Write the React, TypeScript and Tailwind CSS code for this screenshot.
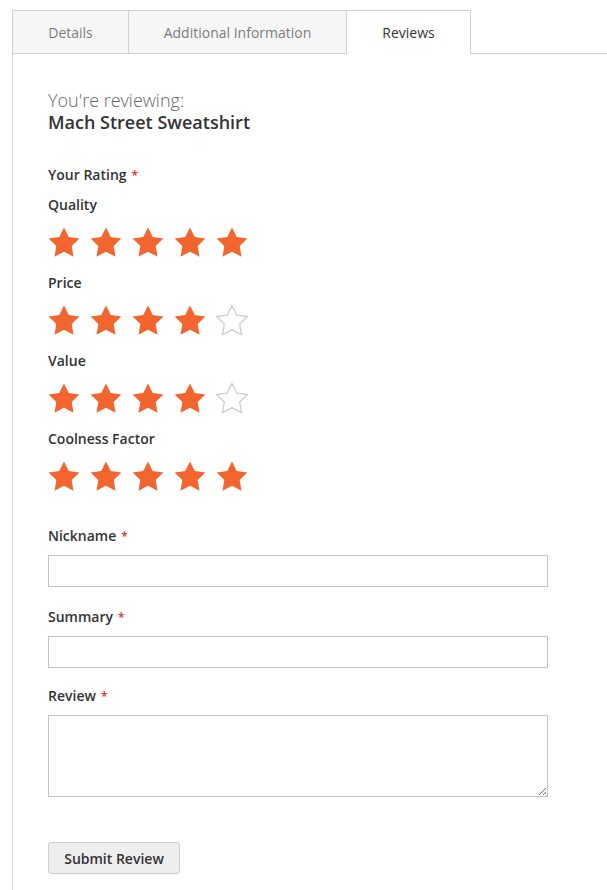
import React from 'react';

const STAR = 'M12 2l3.09 6.26L22 9.27l-5 4.87 1.18 6.88L12 17.77l-6.18 3.25L7 14.14 2 9.27l6.91-1.01L12 2z';

function Star({ filled }: { filled: boolean }) {
  return (
    <svg className="w-[32px] h-[32px]" viewBox="1.6 1.3 20.8 20.4">
      {filled ? (
        <path d={STAR} fill="#f3652f" />
      ) : (
        <path d={STAR} fill="#fff" stroke="#c7c7c7" strokeWidth={0.75} strokeLinejoin="miter" />
      )}
    </svg>
  );
}

function Rating({ label, value }: { label: string; value: number }) {
  return (
    <div className="mb-[15px]">
      <div className="text-[14px] leading-[20px] font-semibold text-[#333] mb-[11px]">{label}</div>
      <div className="flex gap-[10px]">
        {[1, 2, 3, 4, 5].map((i) => (
          <Star key={i} filled={i <= value} />
        ))}
      </div>
    </div>
  );
}

function Label({ children }: { children: React.ReactNode }) {
  return (
    <div className="text-[14px] leading-[20px] font-semibold text-[#333] mb-[8px]">
      {children}
      <span className="ml-[5px] text-[12px] text-[#e02b27]">*</span>
    </div>
  );
}

export default function App() {
  return (
    <div className="min-h-screen bg-white font-['Open_Sans',sans-serif] pt-[10px] pl-[12px]">
      {/* Tabs */}
      <div className="flex h-[44px]">
        <div className="w-[116px] flex items-center justify-center border-t border-l border-b border-[#d1d1d1] bg-[#f6f6f6] text-[14px] text-[#7d7d7d]">
          Details
        </div>
        <div className="w-[218px] flex items-center justify-center border-t border-l border-b border-[#d1d1d1] bg-[#f6f6f6] text-[14px] text-[#7d7d7d]">
          Additional Information
        </div>
        <div className="w-[125px] flex items-center justify-center border-t border-l border-r border-[#d1d1d1] bg-white text-[14px] text-[#333]">
          Reviews
        </div>
        <div className="flex-1 border-b border-[#d1d1d1]" />
      </div>

      {/* Panel */}
      <div className="border-l border-[#d1d1d1] pl-[35px] pt-[35px] pb-[16px]">
        <div className="text-[18px] leading-[22px] font-light text-[#666]">You're reviewing:</div>
        <div className="text-[18px] leading-[22px] font-semibold text-[#333] mb-[32px]">Mach Street Sweatshirt</div>

        <div className="text-[14px] leading-[20px] font-semibold text-[#333] mb-[9px]">
          Your Rating
          <span className="ml-[5px] text-[12px] text-[#e02b27]">*</span>
        </div>

        <Rating label="Quality" value={5} />
        <Rating label="Price" value={4} />
        <Rating label="Value" value={4} />
        <Rating label="Coolness Factor" value={5} />

        <div className="pt-[19px]">
          <Label>Nickname</Label>
          <input type="text" className="block w-[500px] h-[32px] border border-[#c2c2c2] bg-white px-[9px] text-[14px] outline-none" />
        </div>
        <div className="pt-[20px]">
          <Label>Summary</Label>
          <input type="text" className="block w-[500px] h-[32px] border border-[#c2c2c2] bg-white px-[9px] text-[14px] outline-none" />
        </div>
        <div className="pt-[18px]">
          <Label>Review</Label>
          <textarea className="block w-[500px] h-[82px] border border-[#c2c2c2] bg-white px-[9px] py-[6px] text-[14px] outline-none" />
        </div>

        <button
          type="button"
          className="mt-[45px] w-[132px] h-[32px] rounded-[3px] border border-[#cdcdcd] bg-[#eee] text-[14px] font-semibold text-[#333]"
        >
          Submit Review
        </button>
      </div>
    </div>
  );
}
